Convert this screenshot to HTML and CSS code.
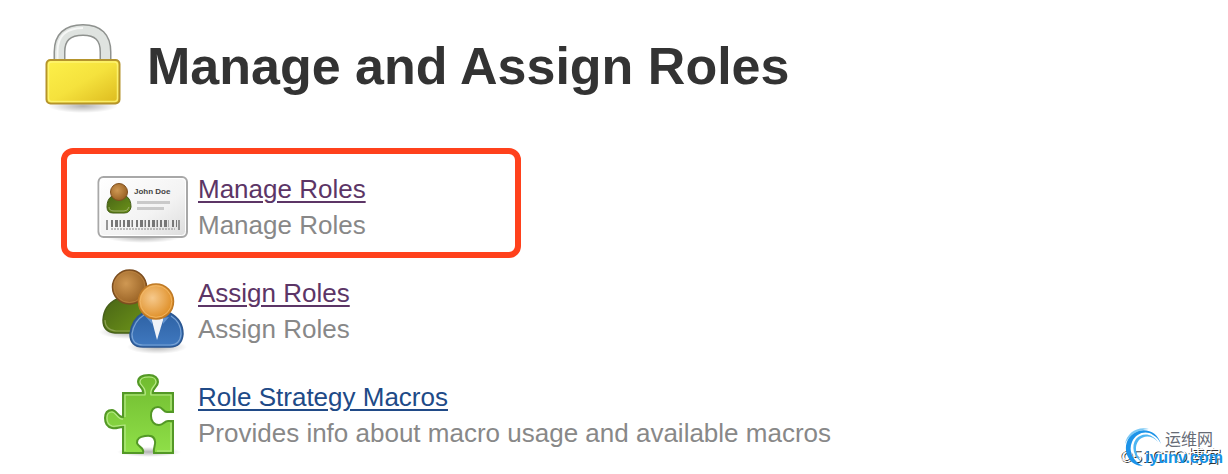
FILE: index.html
```html
<!DOCTYPE html>
<html lang="en">
<head>
  <meta charset="UTF-8">
  <meta name="viewport" content="width=device-width, initial-scale=1.0">
  <title>Manage and Assign Roles</title>
  <link rel="stylesheet" href="styles.css">
</head>
<body>
  <main class="page">
    <header class="page-header">
      <svg class="icon" viewBox="0 0 96 96" aria-hidden="true">
        <defs>
          <linearGradient id="lockBody" x1="0" y1="0" x2="1" y2="1">
            <stop offset="0" stop-color="#fdf04a"/>
            <stop offset="0.5" stop-color="#f5e23d"/>
            <stop offset="1" stop-color="#dcb91d"/>
          </linearGradient>
          <radialGradient id="shade">
            <stop offset="0" stop-color="#000" stop-opacity="0.3"/>
            <stop offset="1" stop-color="#000" stop-opacity="0"/>
          </radialGradient>
        </defs>
        <ellipse cx="48" cy="86" rx="35" ry="7" fill="url(#shade)"/>
        <path d="M24.500 44V32Q24.500 10 48 10Q70.500 10 70.500 32V44" fill="none" stroke="#8f928f" stroke-width="12"/>
        <path d="M24.500 44V32Q24.500 10 48 10Q70.500 10 70.500 32V44" fill="none" stroke="#dfe3e0" stroke-width="9"/>
        <path d="M22.500 44V31Q23 8 48 8" fill="none" stroke="#fff" stroke-width="2" opacity="0.7"/>
        <rect x="11.500" y="40" width="73" height="43.500" rx="4" fill="url(#lockBody)" stroke="#b5942c" stroke-width="2"/>
        <rect x="13.500" y="42" width="69" height="39.500" rx="3" fill="none" stroke="#fff67c" stroke-width="1.500" opacity="0.8"/>
      </svg>
      <h1>Manage and Assign Roles</h1>
    </header>

    <ul class="roles">
      <li class="role highlighted">
        <svg class="icon" viewBox="0 0 96 96" aria-hidden="true">
          <defs>
            <linearGradient id="card" x1="0" y1="0" x2="1" y2="1">
              <stop offset="0" stop-color="#fff"/>
              <stop offset="0.6" stop-color="#f3f3f3"/>
              <stop offset="1" stop-color="#dcdcdc"/>
            </linearGradient>
            <radialGradient id="brownHead" cx="0.4" cy="0.4" r="0.6">
              <stop offset="0" stop-color="#cf9853"/>
              <stop offset="1" stop-color="#9b6426"/>
            </radialGradient>
            <linearGradient id="greenBody" x1="0" y1="0" x2="1" y2="1">
              <stop offset="0" stop-color="#496516"/>
              <stop offset="1" stop-color="#6c9318"/>
            </linearGradient>
          </defs>
          <ellipse cx="48" cy="78" rx="38" ry="6" fill="url(#shade)"/>
          <rect x="3.500" y="18" width="88.500" height="60" rx="5" fill="url(#card)" stroke="#a8a8a8" stroke-width="2"/>
          <rect x="5" y="19.500" width="85.500" height="57" rx="4" fill="none" stroke="#fff" stroke-width="1"/>
          <path d="M12 48Q12 40 17 37H31Q36 40 36 48Q35 54 29 54H18Q12 54 12 48Z" fill="url(#greenBody)" stroke="#405913"/>
          <path d="M14 48Q14 52 19 52H29Q33 52 34 48" fill="none" stroke="#9dae6b"/>
          <circle cx="24" cy="33" r="8.500" fill="url(#brownHead)" stroke="#80501f"/>
          <text class="card-name" x="39" y="35">John Doe</text>
          <path d="M42 43.500H75M42 49.500H69" fill="none" stroke="#c9c9c9" stroke-width="3"/>
          <path d="M12 61V71M84 61V71" stroke="#777" stroke-width="1.500"/>
          <path d="M16 64.500H38M41 64.500H74M77 64.500H82" stroke="#777" stroke-width="7" stroke-dasharray="2 2 3 1.500 1.500 2"/>
          <path d="M16 70H80" stroke="#aaa" stroke-width="1.500" stroke-dasharray="2 1"/>
        </svg>
        <div class="role-text">
          <a class="visited" href="#manage-roles">Manage Roles</a>
          <p>Manage Roles</p>
        </div>
      </li>
      <li class="role">
        <svg class="icon" viewBox="0 0 96 96" aria-hidden="true">
          <defs>
            <radialGradient id="orangeHead" cx="0.4" cy="0.4" r="0.6">
              <stop offset="0" stop-color="#f6c98c"/>
              <stop offset="1" stop-color="#df8f27"/>
            </radialGradient>
            <linearGradient id="blueBody" x1="0" y1="0" x2="0" y2="1">
              <stop offset="0" stop-color="#2e62a4"/>
              <stop offset="1" stop-color="#4079c0"/>
            </linearGradient>
          </defs>
          <ellipse cx="34" cy="69" rx="30" ry="7" fill="url(#shade)"/>
          <ellipse cx="62" cy="84" rx="30" ry="7" fill="url(#shade)"/>
          <path d="M8 57Q9 42 22 36H48V70H20Q8 69 8 57Z" fill="url(#greenBody)" stroke="#48611b" stroke-width="1.500"/>
          <path d="M10 57Q10 67 21 68H38" fill="none" stroke="#8ba052" stroke-width="1.200"/>
          <circle cx="34.500" cy="24" r="17" fill="url(#brownHead)" stroke="#7c4e20" stroke-width="1.500"/>
          <circle cx="34.500" cy="24" r="15.500" fill="none" stroke="#be8644" opacity="0.7"/>
          <path d="M35 71Q37 56 48 50H75Q88 57 88 71Q87 84 75 84H48Q35 84 35 71Z" fill="url(#blueBody)" stroke="#2c5791" stroke-width="1.500"/>
          <path d="M37 71Q39 58 49 52M76 53Q86 59 86 71Q85 82 75 82H48Q37 82 37 71" fill="none" stroke="#79a2d3" stroke-width="1.200"/>
          <path d="M56 54H69L62 77Z" fill="#f0f3f8"/>
          <path d="M51 54L57 61V55ZM74 54L68 61V55Z" fill="#5f91cf"/>
          <circle cx="61" cy="38.500" r="17.500" fill="url(#orangeHead)" stroke="#bf7a26" stroke-width="1.500"/>
          <circle cx="61" cy="38.500" r="15.800" fill="none" stroke="#f4bc6c" opacity="0.8"/>
        </svg>
        <div class="role-text">
          <a class="visited" href="#assign-roles">Assign Roles</a>
          <p>Assign Roles</p>
        </div>
      </li>
      <li class="role">
        <svg class="icon" viewBox="0 0 96 96" aria-hidden="true">
          <defs>
            <linearGradient id="puzzle" x1="0" y1="0" x2="0" y2="1">
              <stop offset="0" stop-color="#70bb2f"/>
              <stop offset="1" stop-color="#8fdf48"/>
            </linearGradient>
          </defs>
          <ellipse cx="54" cy="85" rx="32" ry="5" fill="url(#shade)"/>
          <path d="M28 26H48C49 20 43 20 43 15C43 10 47 8 54 8C60 8 63 11 63 15C63 20 57 21 58 26H78V45H72C68 45 68 40 63 40C58 40 56 44 56 49C56 54 59 58 64 58C69 58 69 54 73 54H78V86H59C58 80 61 78 60 74C59 69 55 68 50 69C45 70 42 71 42 76C43 80 50 81 48 86H28V60C23 60 22 62 17 61C12 60 10 56 10 51C10 46 12 43 17 43C22 43 23 51 28 50Z" fill="url(#puzzle)" stroke="#539826" stroke-width="2"/>
          <path d="M30 50V28H50C52 20 45 19 45 15C45 12 48 10 54 10C58 10 61 12 61 15C61 19 54 21 56 28H76V43M76 56V84H62" fill="none" stroke="#b7e889" stroke-width="1.200"/>
          <path d="M30 84V58C24 58 21 60 17 59C14 58 12 55 12 51C12 47 14 45 17 45C21 45 23 53 28 52" fill="none" stroke="#b7e889" stroke-width="1.200"/>
        </svg>
        <div class="role-text">
          <a href="#role-strategy-macros">Role Strategy Macros</a>
          <p>Provides info about macro usage and available macros</p>
        </div>
      </li>
    </ul>
  </main>

  <div class="watermark">
    <span class="blog">©51CTO博客</span>
    <svg class="swirl" viewBox="0 0 40 40" aria-hidden="true">
      <path d="M37 17C34 6 24 1 14 4C3 8 -1 20 4 30C7 36 13 39 19 39C9 34 4 24 8 15C12 6 22 3 29 8C33 10 35 13 37 17Z" fill="#1c93e8"/>
      <path d="M34 15C28 6 18 5 12 12C7 19 9 30 19 36C11 28 10 19 15 13C20 8 28 8 34 15Z" fill="#4db5f2"/>
      <path d="M25 2C13 -1 3 6 1 17C5 8 13 3 25 2Z" fill="#7cc9f5"/>
    </svg>
    <span class="brand" lang="zh">运维网</span>
    <span class="domain">iyunv.com</span>
  </div>
</body>
</html>
```
FILE: styles.css
```css
body {
  margin: 0;
  font-family: "Liberation Sans", "Noto Sans CJK SC", Arial, sans-serif;
  font-size: 26px;
  line-height: 36px;
  color: #333;
  background-color: #fff;
}

.page {
  padding: 20px 35px 0;
}

.page-header {
  display: flex;
  align-items: center;
  gap: 16px;
}

.icon {
  flex: none;
  width: 96px;
  height: 96px;
}

h1 {
  margin: 0 0 4px;
  font-size: 52px;
  line-height: 60px;
}

.roles {
  display: flex;
  flex-direction: column;
  gap: 8px;
  margin: 43px 0 0;
  padding: 0 0 0 60px;
  list-style: none;
}

.role {
  position: relative;
  display: flex;
  align-items: center;
  gap: 7px;
}

.role-text a {
  color: #204a87;
  text-decoration-thickness: 2px;
  text-underline-offset: 3px;
}

.role-text a.visited {
  color: #5c3566;
}

.role-text p {
  margin: 0;
  color: #888;
}

/* red frame around the selected entry */
.highlighted::before {
  content: "";
  position: absolute;
  top: -11px;
  left: -34px;
  width: 448px;
  height: 98px;
  border: 6px solid #ff411c;
  border-radius: 12px;
}

.card-name {
  font-size: 8px;
  font-weight: bold;
  fill: #444;
}

.watermark {
  position: absolute;
  right: 0;
  bottom: 0;
  width: 108px;
  height: 48px;
  line-height: 20px;
  white-space: nowrap;
}

.watermark span,
.swirl {
  position: absolute;
}

.swirl {
  top: 1px;
  left: 4px;
  width: 40px;
  height: 40px;
}

.brand {
  top: 4px;
  left: 45px;
  font-size: 16px;
  color: #666b75;
}

.blog {
  top: 21px;
  left: 0;
  font-size: 17px;
  color: #fff;
  text-shadow: 1px 1px 0 #333;
}

.domain {
  top: 22px;
  left: 25px;
  font-size: 16px;
  font-weight: bold;
  color: #1592e6;
}
```
